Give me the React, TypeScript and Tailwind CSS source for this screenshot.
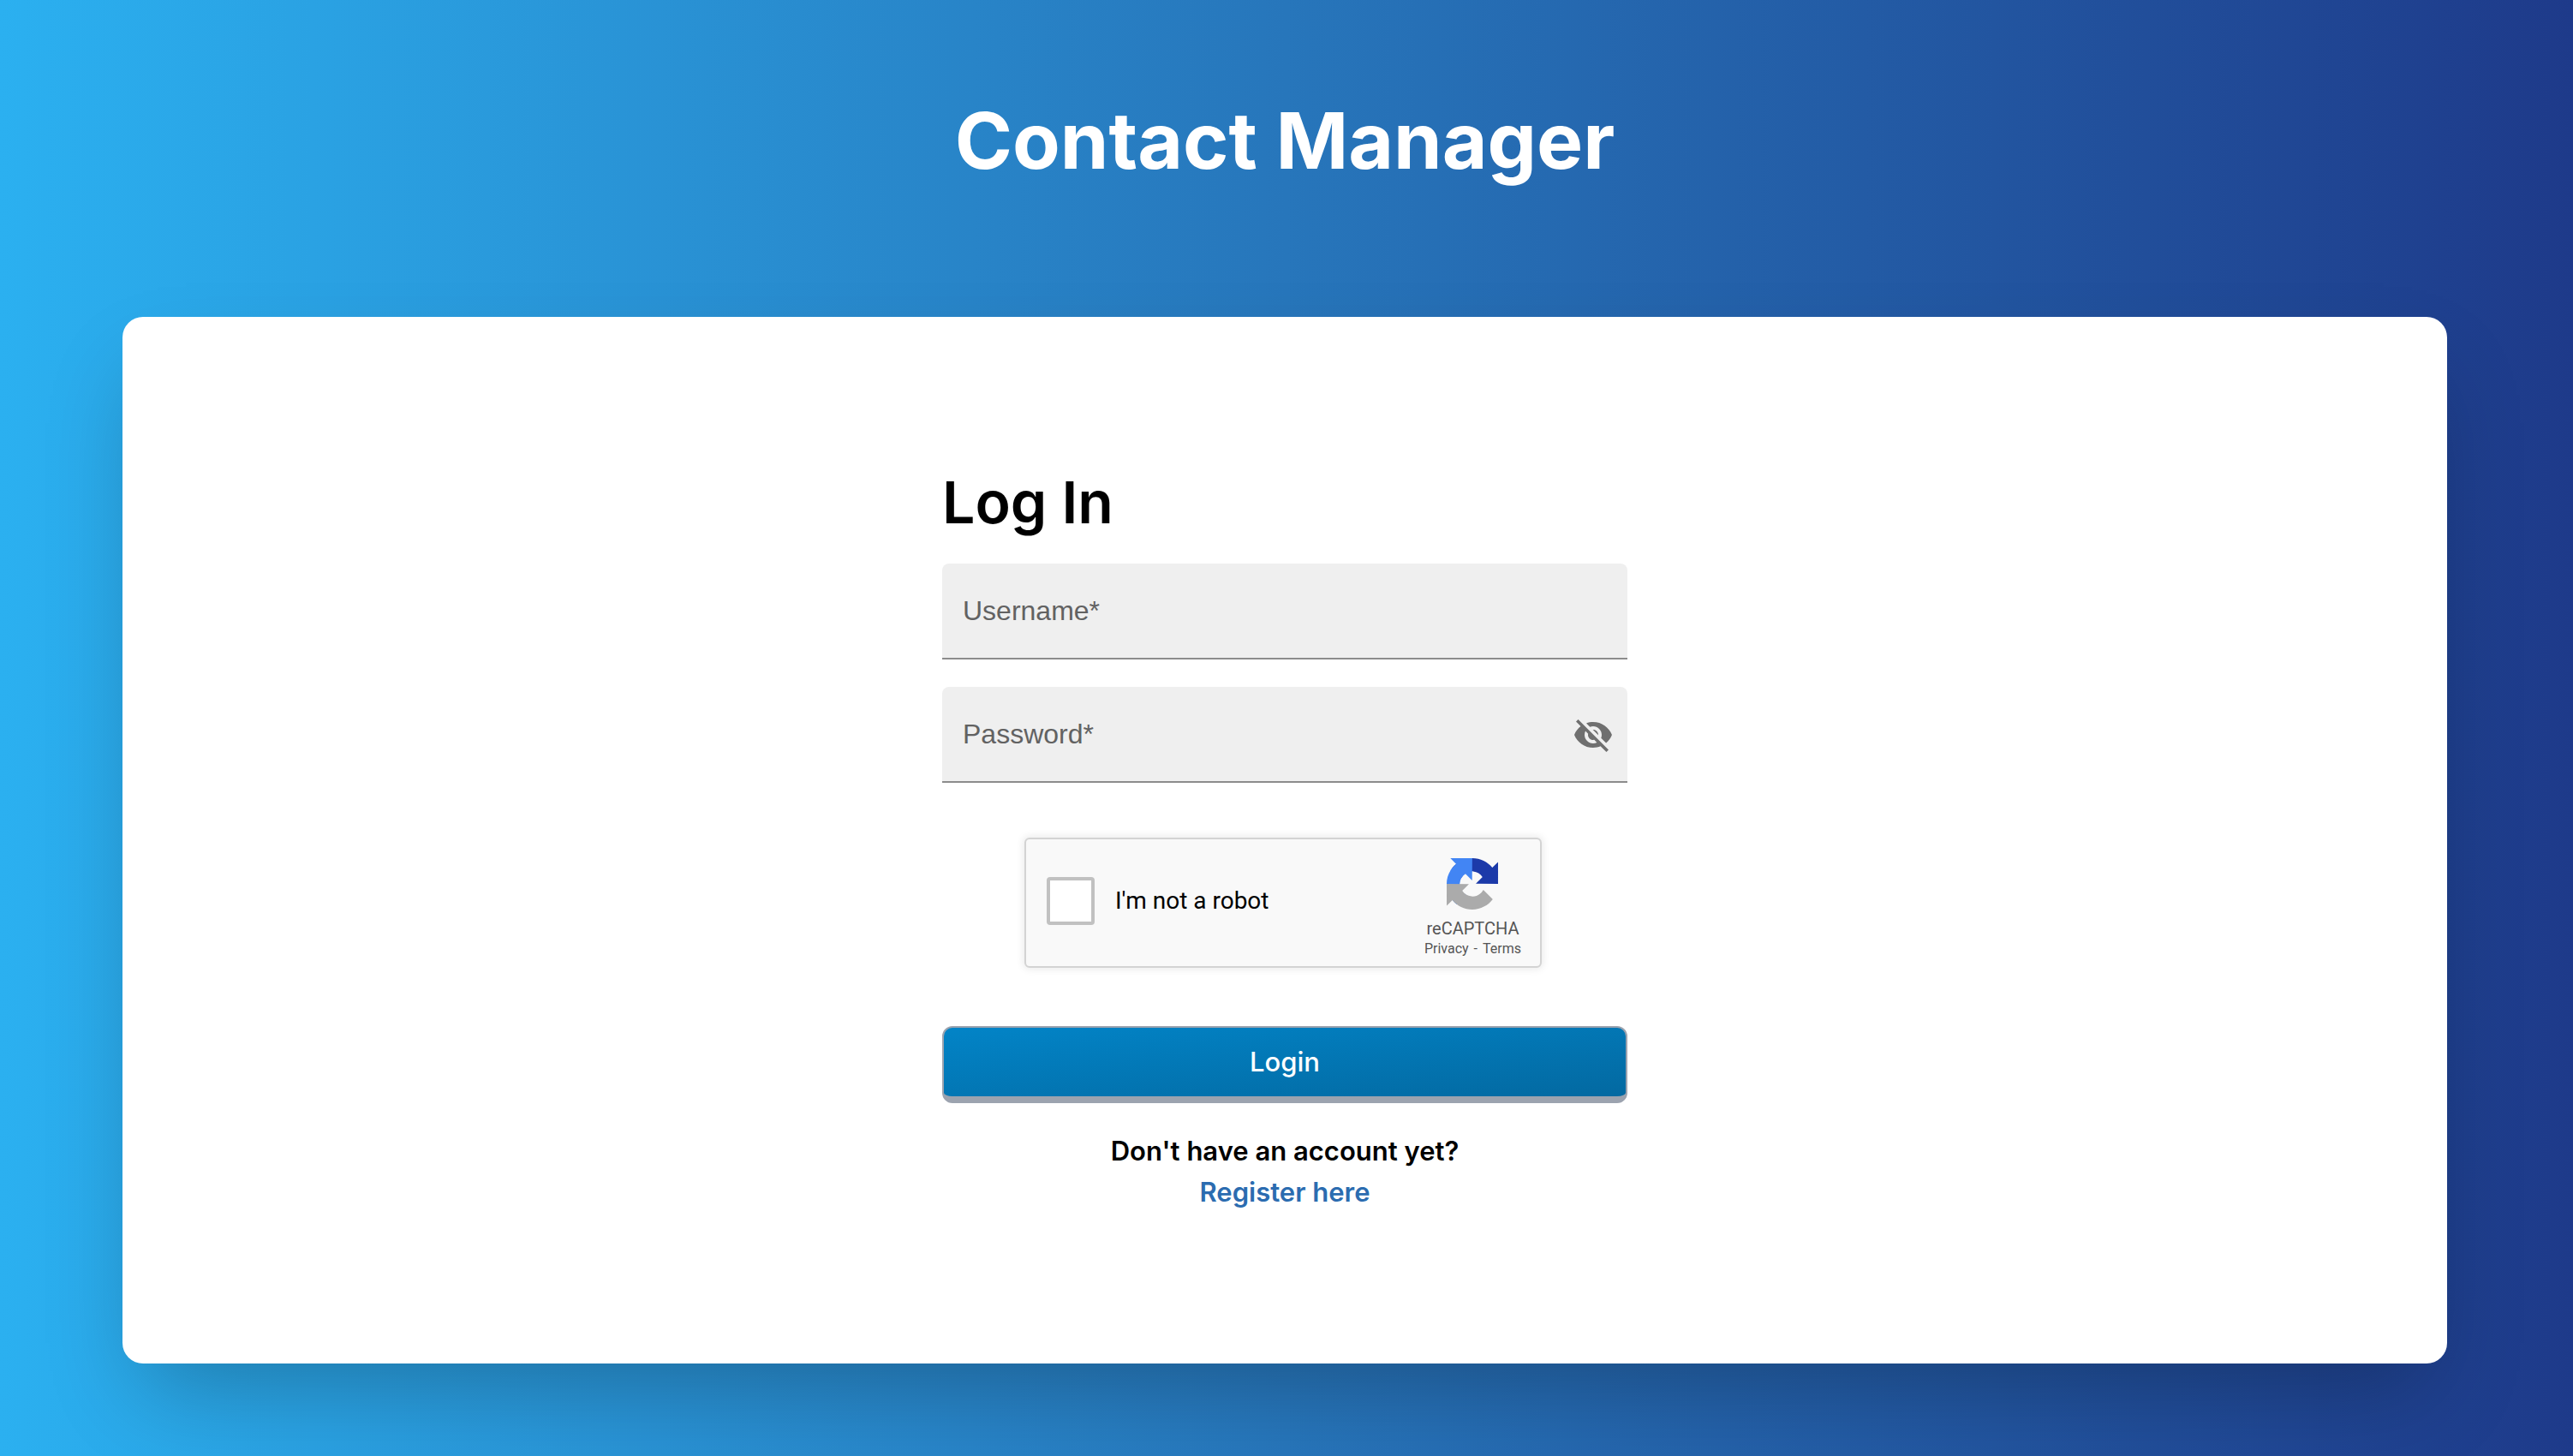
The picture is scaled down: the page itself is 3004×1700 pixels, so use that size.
import { useState } from "react";

function EyeOffIcon() {
  return (
    <svg viewBox="0 0 24 24" className="size-12" fill="currentColor" aria-hidden="true">
      <path d="M12 7c2.76 0 5 2.24 5 5 0 .65-.13 1.26-.36 1.83l2.92 2.92c1.51-1.26 2.7-2.89 3.43-4.75-1.73-4.39-6-7.5-11-7.5-1.4 0-2.74.25-3.98.7l2.16 2.16C10.74 7.13 11.35 7 12 7zM2 4.27l2.28 2.28.46.46C3.08 8.3 1.78 10.02 1 12c1.73 4.39 6 7.5 11 7.5 1.55 0 3.03-.3 4.38-.84l.42.42L19.73 22 21 20.73 3.27 3 2 4.27zM7.53 9.8l1.55 1.55c-.05.21-.08.43-.08.65 0 1.66 1.34 3 3 3 .22 0 .44-.03.65-.08l1.55 1.55c-.67.33-1.41.53-2.2.53-2.76 0-5-2.24-5-5 0-.79.2-1.53.53-2.2zm4.31-.78l3.15 3.15.02-.16c0-1.66-1.34-3-3-3l-.17.01z" />
    </svg>
  );
}

function RecaptchaLogo() {
  return (
    <svg viewBox="0 0 64 64" className="size-15" aria-hidden="true">
      <path fill="#1c3aa9" d="M64 31.955l-.033-1.37V4.687l-7.16 7.16C50.948 4.674 42.033.093 32.05.093c-10.4 0-19.622 4.96-25.458 12.64l11.736 11.86a15.55 15.55 0 0 1 4.754-5.334c2.05-1.6 4.952-2.906 8.87-2.906.473 0 .838.055 1.107.16 4.855.383 9.062 3.063 11.54 6.952l-8.307 8.307L64 31.955" />
      <path fill="#4285f4" d="M31.862.094l-1.37.033H4.594l7.16 7.16C4.58 13.147 0 22.06 0 32.046c0 10.4 4.96 19.622 12.64 25.458L24.5 45.768a15.55 15.55 0 0 1-5.334-4.754c-1.6-2.05-2.906-4.952-2.906-8.87 0-.473.055-.838.16-1.107.383-4.855 3.063-9.062 6.952-11.54l8.307 8.307L31.862.094" />
      <path fill="#ababab" d="M.001 32.045l.033 1.37v25.898l7.16-7.16c5.86 7.173 14.774 11.754 24.76 11.754 10.4 0 19.622-4.96 25.458-12.64l-11.736-11.86a15.55 15.55 0 0 1-4.754 5.334c-2.05 1.6-4.952 2.906-8.87 2.906-.473 0-.838-.055-1.107-.16-4.855-.383-9.062-3.063-11.54-6.952l8.307-8.307L.001 32.045" />
    </svg>
  );
}

const fieldClass =
  "h-28 w-full rounded-t-lg border-b-2 border-[#8c8c8c] bg-[#efefef] px-6 font-['Liberation_Sans',Arial,sans-serif] text-[32px] leading-10 text-black/87 placeholder:text-[#626262] outline-none";

export default function App() {
  const [shown, setShown] = useState(false);
  return (
    <div className="flex min-h-screen flex-col items-center bg-linear-to-r/srgb from-[#2bb0f0] via-[#2776bb] to-[#1e3a8a] pr-[147px] pb-[108px] pl-[143px] font-[Inter,sans-serif] text-black">
      <h1 className="pt-29 pb-[158px] text-center text-[91px] leading-24 font-bold text-white">
        Contact Manager
      </h1>
      <main className="flex w-full grow flex-col items-center justify-center rounded-3xl bg-white shadow-[0_50px_100px_-24px_rgba(0,0,0,0.25)]">
        <form className="flex w-full max-w-[800px] flex-col pt-1" onSubmit={(e) => e.preventDefault()}>
          <h2 className="mb-9 text-[68px] leading-18 font-semibold">Log In</h2>
          <input aria-label="Username" placeholder="Username*" className={fieldClass} />
          <div className="relative mt-8">
            <input
              aria-label="Password"
              type={shown ? "text" : "password"}
              placeholder="Password*"
              className={fieldClass}
            />
            <button
              type="button"
              aria-label="Toggle password visibility"
              onClick={() => setShown(!shown)}
              className="absolute inset-y-0 right-4 flex items-center text-[#6f6f6f]"
            >
              <EyeOffIcon />
            </button>
          </div>
          <div className="mt-16 mr-1 flex w-[604px] items-center self-center rounded-md border-2 border-[#d3d3d3] bg-[#f9f9f9] font-[Roboto,sans-serif] shadow-[0_0_8px_2px_rgba(0,0,0,0.08)]">
            <label className="flex grow items-center gap-6 pb-1 pl-6 text-[28px] leading-9">
              <input
                type="checkbox"
                className="size-14 appearance-none rounded-sm border-4 border-[#c1c1c1] bg-white"
              />
              I'm not a robot
            </label>
            <div className="flex flex-col items-center pt-[22px] pr-[22px] pb-2 text-[#555555]">
              <RecaptchaLogo />
              <p className="mt-2.5 text-xl leading-6">reCAPTCHA</p>
              <p className="flex gap-1.5 text-base leading-6">
                <a href="#privacy">Privacy</a>
                <span>-</span>
                <a href="#terms">Terms</a>
              </p>
            </div>
          </div>
          <button
            type="submit"
            className="mt-17 rounded-xl border-2 border-b-8 border-[#9ca3af] bg-linear-to-br/srgb from-[#0284c7] to-[#0369a1] py-5 text-[31px] leading-10 font-medium text-white"
          >
            Login
          </button>
          <p className="mt-8 text-center text-[31px] leading-12 font-semibold">
            Don't have an account yet?
            <br />
            <a href="#register" className="text-[#2b6cb0]">
              Register here
            </a>
          </p>
        </form>
      </main>
    </div>
  );
}
